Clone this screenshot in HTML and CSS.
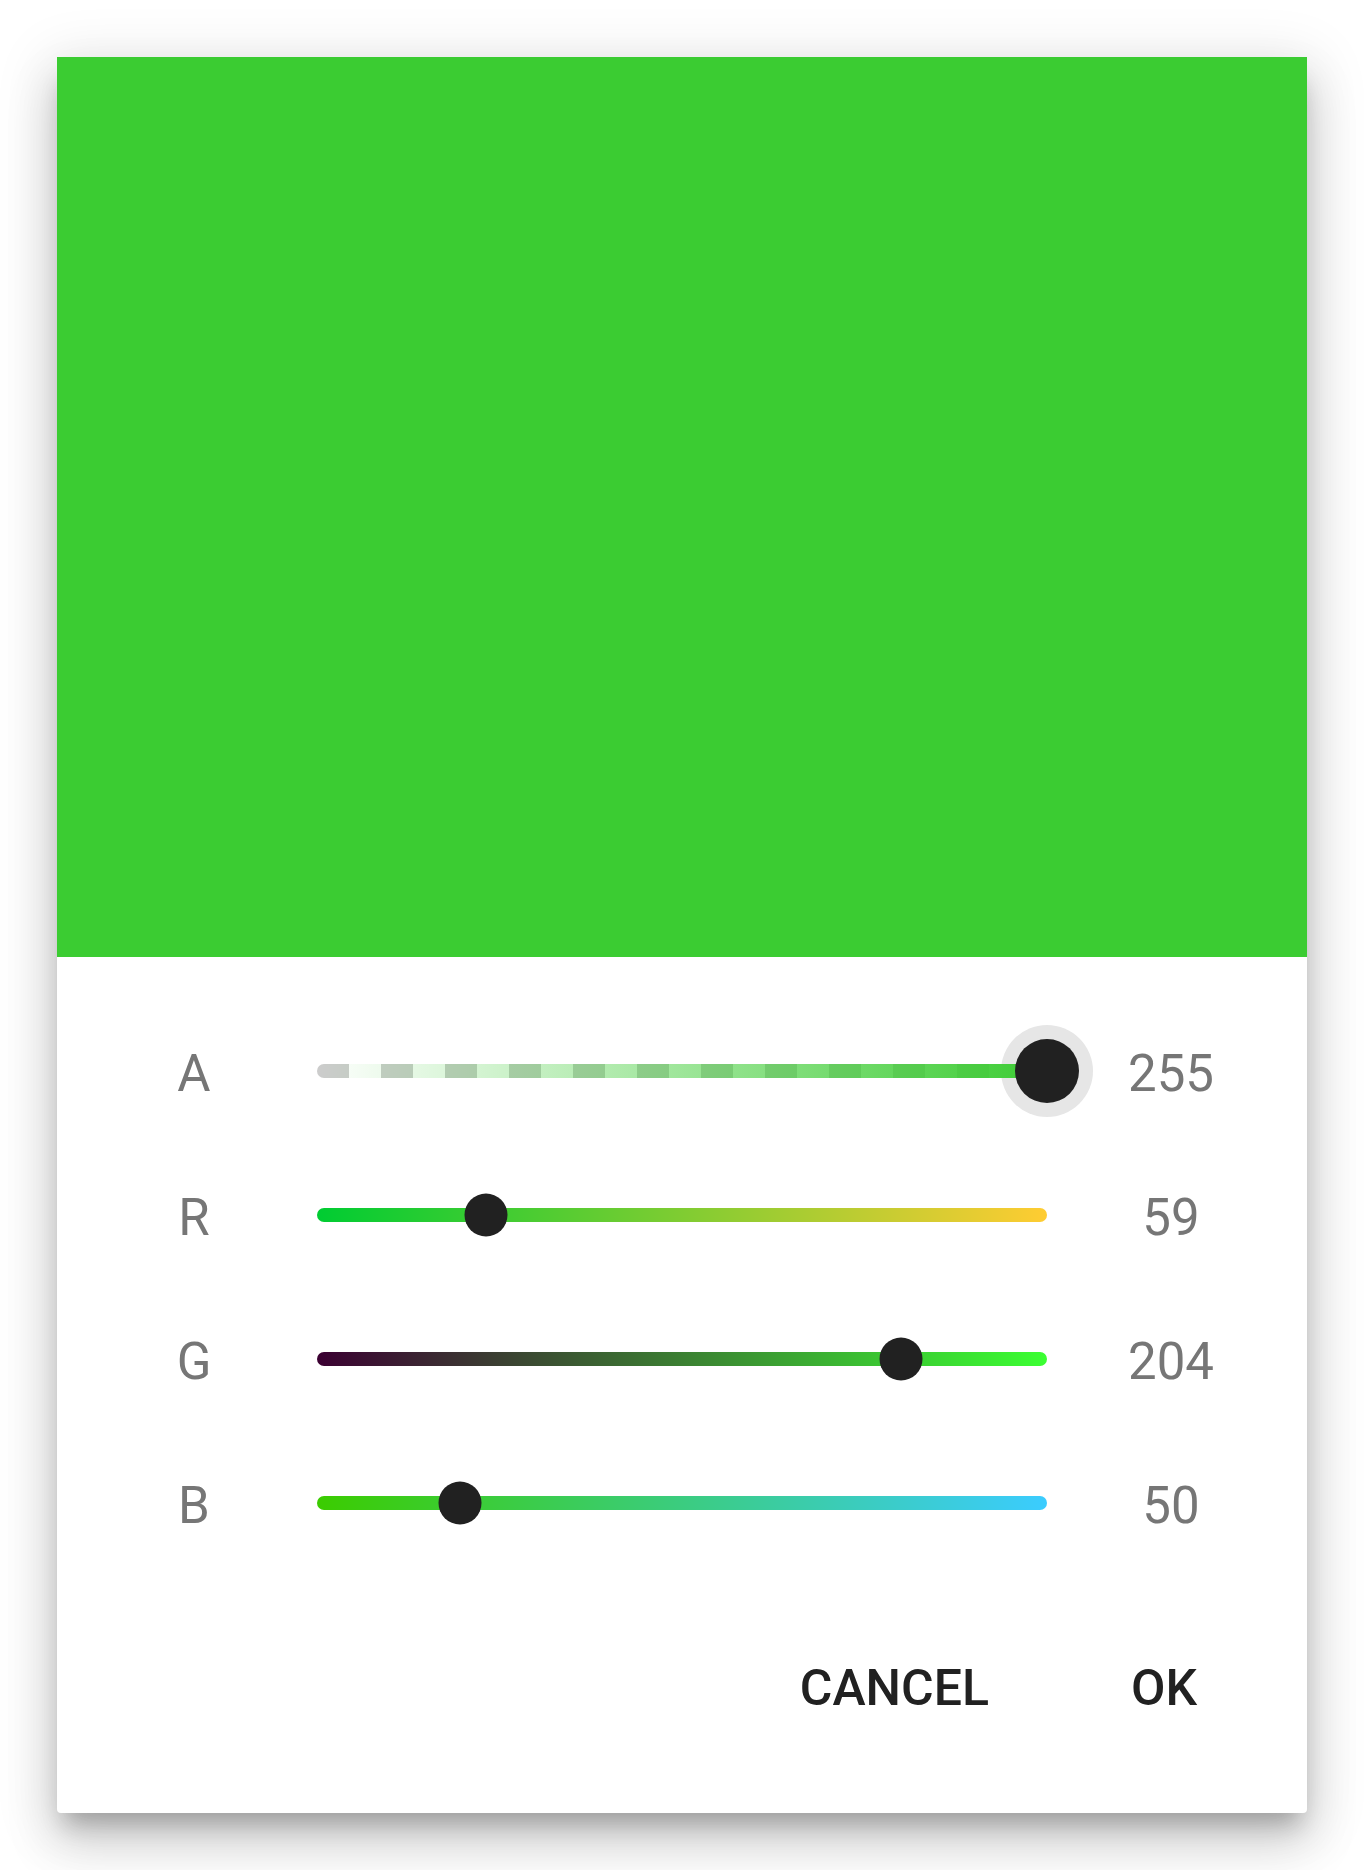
FILE: index.html
```html
<!DOCTYPE html>
<html lang="en">
<head>
<meta charset="utf-8">
<title>Color picker</title>
<link rel="stylesheet" href="styles.css">
</head>
<body>
<div class="dialog">
  <div class="preview"></div>
  <div class="sliders">
    <div class="row">
      <span class="label">A</span>
      <div class="track">
        <div class="bar bar-a"></div>
        <div class="halo" style="left:100%"></div>
        <div class="thumb thumb-active" style="left:100%"></div>
      </div>
      <span class="value">255</span>
    </div>
    <div class="row">
      <span class="label">R</span>
      <div class="track">
        <div class="bar bar-r"></div>
        <div class="thumb" style="left:23.137%"></div>
      </div>
      <span class="value">59</span>
    </div>
    <div class="row">
      <span class="label">G</span>
      <div class="track">
        <div class="bar bar-g"></div>
        <div class="thumb" style="left:80%"></div>
      </div>
      <span class="value">204</span>
    </div>
    <div class="row">
      <span class="label">B</span>
      <div class="track">
        <div class="bar bar-b"></div>
        <div class="thumb" style="left:19.608%"></div>
      </div>
      <span class="value">50</span>
    </div>
  </div>
  <div class="actions">
    <button class="btn">CANCEL</button>
    <button class="btn btn-ok">OK</button>
  </div>
</div>
</body>
</html>
```

FILE: styles.css
```css
html, body {
  margin: 0;
  background: #ffffff;
}
body {
  padding: 57px;
  font-family: Roboto, "Noto Sans", sans-serif;
}
.dialog {
  width: 1250px;
  background: #ffffff;
  border-radius: 4px;
  box-shadow:
    0 18px 22px -8px rgba(0, 0, 0, 0.24),
    0 30px 50px 4px rgba(0, 0, 0, 0.13),
    0 10px 55px 10px rgba(0, 0, 0, 0.10);
}
.preview {
  height: 900px;
  background: #3bcc32;
}
.sliders {
  padding-top: 42px;
}
.row {
  display: grid;
  grid-template-columns: 260px 730px 1fr;
  height: 144px;
  align-items: center;
}
.label {
  width: 80px;
  margin-left: 97px;
  text-align: center;
  font-size: 51px;
  color: #767676;
  position: relative;
  top: 2px;
}
.value {
  text-align: center;
  padding-right: 12px;
  font-size: 51px;
  color: #767676;
  position: relative;
  top: 2px;
}
.track {
  position: relative;
  height: 14px;
  z-index: 0;
}
.bar {
  position: relative;
  z-index: 1;
  height: 14px;
  border-radius: 7px;
}
.bar-a {
  background:
    linear-gradient(to right, rgba(59, 204, 50, 0), rgba(59, 204, 50, 1)),
    repeating-linear-gradient(to right, #cccccc 0 32px, #ffffff 32px 64px);
}
.bar-r {
  background: linear-gradient(to right, #00cc32, #ffcc32);
}
.bar-g {
  background: linear-gradient(to right, #3b0032, #3bff32);
}
.bar-b {
  background: linear-gradient(to right, #3bcc00, #3bccff);
}
.thumb {
  position: absolute;
  top: 50%;
  width: 43px;
  height: 43px;
  border-radius: 50%;
  background: #212121;
  transform: translate(-50%, -50%);
  z-index: 2;
}
.thumb-active {
  width: 64px;
  height: 64px;
}
.halo {
  position: absolute;
  top: 50%;
  width: 92px;
  height: 92px;
  border-radius: 50%;
  background: #e6e6e6;
  transform: translate(-50%, -50%);
  z-index: 0;
}
.actions {
  display: flex;
  justify-content: flex-end;
  align-items: center;
  height: 238px;
  box-sizing: border-box;
  padding: 0 110px 12px 0;
}
.btn {
  font-family: Roboto, "Noto Sans", sans-serif;
  font-weight: 500;
  font-size: 50px;
  color: #212121;
  background: none;
  border: 0;
  padding: 0;
  margin: 0;
}
.btn-ok {
  margin-left: 142px;
}
```
